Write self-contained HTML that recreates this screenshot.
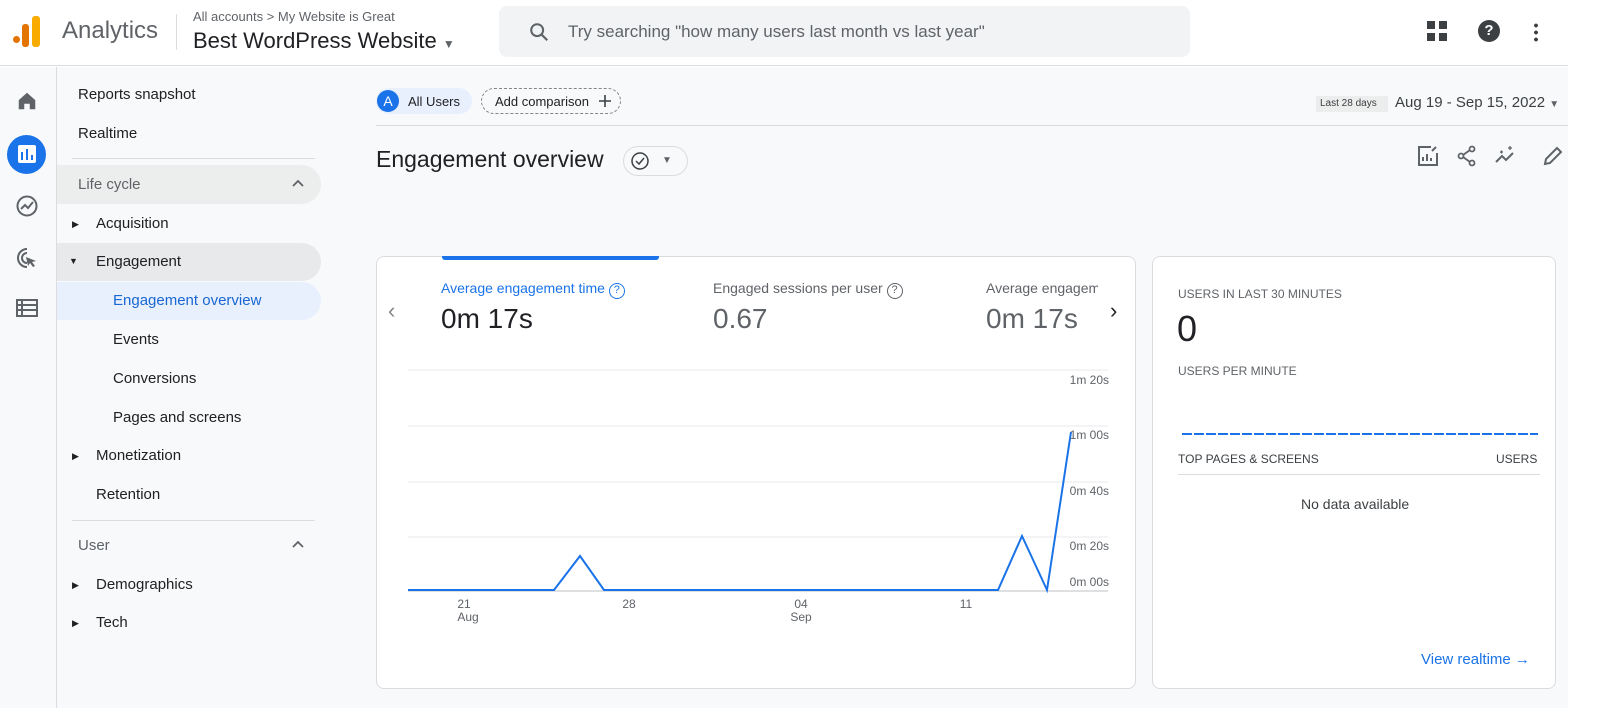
<!DOCTYPE html>
<html><head><style>
*{box-sizing:border-box;margin:0;padding:0}
body{width:1600px;height:708px;overflow:hidden;background:#fff;font-family:"Liberation Sans",sans-serif;color:#202124;position:relative}
.a{position:absolute}
.nav{font-size:15px;color:#202124}
.g{color:#5f6368}
</style></head><body>
<!-- header -->
<div class="a" style="left:0;top:0;width:1568px;height:66px;background:#fff;border-bottom:1px solid #dadce0"></div>
<div class="a" style="left:13px;top:36px;width:7px;height:7px;border-radius:50%;background:#e37400"></div>
<div class="a" style="left:22px;top:24px;width:7px;height:23px;border-radius:3px;background:#e37400"></div>
<div class="a" style="left:32px;top:16px;width:8px;height:31px;border-radius:3px;background:#f9ab00"></div>
<div class="a" style="left:62px;top:17px;font-size:24px;color:#5f6368">Analytics</div>
<div class="a" style="left:176px;top:14px;width:1px;height:36px;background:#dadce0"></div>
<div class="a" style="left:193px;top:9px;font-size:13px;color:#5f6368">All accounts &gt; My Website is Great</div>
<div class="a" style="left:193px;top:28px;font-size:22px;color:#202124">Best WordPress Website <span style="font-size:12px;color:#5f6368">▼</span></div>
<div class="a" style="left:499px;top:6px;width:691px;height:51px;background:#f1f3f4;border-radius:8px"></div>
<svg class="a" style="left:528px;top:21px" width="22" height="22" viewBox="0 0 24 24"><circle cx="10" cy="10" r="6.5" fill="none" stroke="#5f6368" stroke-width="2.2"/><path d="M15 15l6 6" stroke="#5f6368" stroke-width="2.4"/></svg>
<div class="a" style="left:568px;top:22px;font-size:17px;color:#5f6368">Try searching "how many users last month vs last year"</div>
<div class="a" style="left:1427px;top:21px;width:20px;height:20px;background:
linear-gradient(#3c4043,#3c4043) 0 0/8px 8px no-repeat,linear-gradient(#3c4043,#3c4043) 12px 0/8px 8px no-repeat,linear-gradient(#3c4043,#3c4043) 0 12px/8px 8px no-repeat,linear-gradient(#3c4043,#3c4043) 12px 12px/8px 8px no-repeat"></div>
<div class="a" style="left:1478px;top:20px;width:22px;height:22px;border-radius:50%;background:#3c4043;color:#fff;font-size:15px;font-weight:bold;text-align:center;line-height:22px">?</div>
<div class="a" style="left:1534px;top:22px;width:4px;height:20px;background:radial-gradient(circle,#3c4043 1.8px,transparent 2px) 0 0/4px 7px"></div>
<!-- body bg -->
<div class="a" style="left:0;top:67px;width:1568px;height:641px;background:#f8f9fa"></div>
<div class="a" style="left:56px;top:67px;width:1px;height:641px;background:#dadce0"></div>
<!-- left icons -->
<svg class="a" style="left:16px;top:90px" width="22" height="22" viewBox="0 0 24 24"><path d="M3 11L12 3l9 8v10h-6v-6H9v6H3z" fill="#5f6368"/></svg>
<div class="a" style="left:7px;top:135px;width:39px;height:39px;border-radius:50%;background:#1a73e8"></div>
<div class="a" style="left:18px;top:145px;width:18px;height:18px;border-radius:2px;background:#fff"></div>
<div class="a" style="left:21px;top:152px;width:2px;height:8px;background:#1a73e8"></div><div class="a" style="left:26px;top:149px;width:2px;height:11px;background:#1a73e8"></div><div class="a" style="left:31px;top:155px;width:2px;height:5px;background:#1a73e8"></div>
<svg class="a" style="left:15px;top:194px" width="24" height="24" viewBox="0 0 24 24"><circle cx="12" cy="12" r="9.5" fill="none" stroke="#5f6368" stroke-width="2"/><path d="M6 15l4-4 3 3 5-6" fill="none" stroke="#5f6368" stroke-width="2"/></svg>
<svg class="a" style="left:15px;top:246px" width="24" height="24" viewBox="0 0 24 24"><path d="M12 3a9 9 0 1 0 0 18" fill="none" stroke="#5f6368" stroke-width="2"/><path d="M12 7a5 5 0 1 0 0 10" fill="none" stroke="#5f6368" stroke-width="2"/><path d="M11 11l10 4-4 1 3 4-2 1-3-4-2 3z" fill="#5f6368"/></svg>
<svg class="a" style="left:16px;top:298px" width="22" height="20" viewBox="0 0 22 20"><path d="M1 2h20v16H1z M1 7h20 M1 12h20 M6 2v16" fill="none" stroke="#5f6368" stroke-width="2"/></svg>
<!-- nav -->
<div class="a nav" style="left:78px;top:86px">Reports snapshot</div>
<div class="a nav" style="left:78px;top:125px">Realtime</div>
<div class="a" style="left:72px;top:158px;width:243px;height:1px;background:#dadce0"></div>
<div class="a" style="left:57px;top:165px;width:264px;height:39px;background:#eceded;border-radius:0 20px 20px 0"></div>
<div class="a nav g" style="left:78px;top:176px">Life cycle</div>
<svg class="a" style="left:291px;top:179px" width="14" height="9" viewBox="0 0 14 9"><path d="M2 7l5-5 5 5" fill="none" stroke="#5f6368" stroke-width="1.8"/></svg>
<div class="a" style="left:72px;top:219px;font-size:9px">▶</div>
<div class="a nav" style="left:96px;top:215px">Acquisition</div>
<div class="a" style="left:57px;top:243px;width:264px;height:38px;background:#e8e9ea;border-radius:0 20px 20px 0"></div>
<div class="a" style="left:69px;top:256px;font-size:9px">▼</div>
<div class="a nav" style="left:96px;top:253px">Engagement</div>
<div class="a" style="left:57px;top:282px;width:264px;height:38px;background:#e8f0fe;border-radius:0 20px 20px 0"></div>
<div class="a nav" style="left:113px;top:292px;color:#1967d2">Engagement overview</div>
<div class="a nav" style="left:113px;top:331px">Events</div>
<div class="a nav" style="left:113px;top:370px">Conversions</div>
<div class="a nav" style="left:113px;top:409px">Pages and screens</div>
<div class="a" style="left:72px;top:451px;font-size:9px">▶</div>
<div class="a nav" style="left:96px;top:447px">Monetization</div>
<div class="a nav" style="left:96px;top:486px">Retention</div>
<div class="a" style="left:72px;top:520px;width:243px;height:1px;background:#dadce0"></div>
<div class="a nav g" style="left:78px;top:537px">User</div>
<svg class="a" style="left:291px;top:540px" width="14" height="9" viewBox="0 0 14 9"><path d="M2 7l5-5 5 5" fill="none" stroke="#5f6368" stroke-width="1.8"/></svg>
<div class="a" style="left:72px;top:580px;font-size:9px">▶</div>
<div class="a nav" style="left:96px;top:576px">Demographics</div>
<div class="a" style="left:72px;top:618px;font-size:9px">▶</div>
<div class="a nav" style="left:96px;top:614px">Tech</div>
<!-- top bar main -->
<div class="a" style="left:376px;top:88px;width:96px;height:26px;border-radius:13px;background:#e8f0fe"></div>
<div class="a" style="left:377px;top:90px;width:22px;height:22px;border-radius:50%;background:#1a73e8;color:#fff;font-size:14px;text-align:center;line-height:22px">A</div>
<div class="a" style="left:408px;top:94px;font-size:13px">All Users</div>
<div class="a" style="left:481px;top:88px;width:140px;height:26px;border-radius:13px;border:1px dashed #80868b"></div>
<div class="a" style="left:495px;top:94px;font-size:13px">Add comparison</div>
<svg class="a" style="left:598px;top:94px" width="14" height="14" viewBox="0 0 14 14"><path d="M7 1v12M1 7h12" stroke="#3c4043" stroke-width="1.6"/></svg>
<div class="a" style="left:1316px;top:96px;width:72px;height:16px;background:#eceded"></div>
<div class="a" style="left:1320px;top:98px;font-size:10px;color:#3c4043">Last 28 days</div>
<div class="a" style="left:1395px;top:94px;font-size:15px;color:#3c4043">Aug 19 - Sep 15, 2022 <span style="font-size:10px;color:#5f6368">▼</span></div>
<div class="a" style="left:376px;top:125px;width:1192px;height:1px;background:#dadce0"></div>
<div class="a" style="left:376px;top:146px;font-size:23px">Engagement overview</div>
<div class="a" style="left:623px;top:146px;width:65px;height:30px;border-radius:15px;border:1px solid #dadce0"></div>
<svg class="a" style="left:630px;top:151px" width="20" height="20" viewBox="0 0 20 20"><circle cx="10" cy="10" r="8" fill="none" stroke="#3c4043" stroke-width="1.5"/><path d="M6 10l3 3 5-6" fill="none" stroke="#3c4043" stroke-width="1.5"/></svg>
<div class="a" style="left:662px;top:155px;font-size:10px;color:#5f6368">▼</div>
<svg class="a" style="left:1417px;top:145px" width="22" height="22" viewBox="0 0 22 22"><path d="M14 2H2v18h18V8" fill="none" stroke="#5f6368" stroke-width="2"/><path d="M6 16v-4M10 16V9M14 16v-3M15 6l4-4" stroke="#5f6368" stroke-width="2"/></svg>
<svg class="a" style="left:1456px;top:145px" width="22" height="22" viewBox="0 0 22 22"><circle cx="16" cy="4" r="2.5" fill="none" stroke="#5f6368" stroke-width="1.8"/><circle cx="5" cy="11" r="2.5" fill="none" stroke="#5f6368" stroke-width="1.8"/><circle cx="16" cy="18" r="2.5" fill="none" stroke="#5f6368" stroke-width="1.8"/><path d="M7 10l7-5M7 12l7 5" stroke="#5f6368" stroke-width="1.8"/></svg>
<svg class="a" style="left:1494px;top:145px" width="24" height="22" viewBox="0 0 24 22"><path d="M2 17l6-6 4 4 7-7" fill="none" stroke="#5f6368" stroke-width="2"/><path d="M14 3h4M16 1v4M6 7h3M7.5 5.5v3" stroke="#5f6368" stroke-width="1.3"/></svg>
<svg class="a" style="left:1542px;top:145px" width="22" height="22" viewBox="0 0 22 22"><path d="M3 19l1-5L15 3l4 4L8 18z" fill="none" stroke="#5f6368" stroke-width="2"/></svg>
<!-- left card -->
<div class="a" style="left:376px;top:256px;width:760px;height:433px;background:#fff;border:1px solid #dadce0;border-radius:8px"></div>
<div class="a" style="left:442px;top:256px;width:217px;height:4px;background:#1a73e8;border-radius:0 0 3px 3px"></div>
<div class="a" style="left:388px;top:298px;font-size:22px;color:#80868b">‹</div>
<div class="a" style="left:1110px;top:298px;font-size:22px;color:#202124">›</div>
<div class="a" style="left:441px;top:280px;font-size:14px;color:#1a73e8">Average engagement time <span style="display:inline-block;width:16px;height:16px;border:1.5px solid #1a73e8;border-radius:50%;font-size:11px;text-align:center;line-height:13px">?</span></div>
<div class="a" style="left:441px;top:303px;font-size:28px">0m 17s</div>
<div class="a" style="left:713px;top:280px;font-size:14px;color:#5f6368">Engaged sessions per user <span style="display:inline-block;width:16px;height:16px;border:1.5px solid #5f6368;border-radius:50%;font-size:11px;text-align:center;line-height:13px">?</span></div>
<div class="a" style="left:713px;top:303px;font-size:28px;color:#5f6368">0.67</div>
<div class="a" style="left:986px;top:280px;width:112px;overflow:hidden;white-space:nowrap;font-size:14px;color:#5f6368">Average engagement</div>
<div class="a" style="left:986px;top:303px;font-size:28px;color:#5f6368">0m 17s</div>
<svg class="a" style="left:376px;top:360px" width="760" height="270">
<g stroke="#e8eaed" stroke-width="1"><line x1="32" y1="10" x2="732" y2="10"/><line x1="32" y1="66" x2="732" y2="66"/><line x1="32" y1="122" x2="732" y2="122"/><line x1="32" y1="177" x2="732" y2="177"/></g>
<line x1="32" y1="231" x2="732" y2="231" stroke="#bdc1c6"/>
<polyline fill="none" stroke="#1a73e8" stroke-width="2" points="32,230 178,230 204,196 228,230 622,230 646,176 671,230 695,72"/>
<g font-size="12" fill="#5f6368" text-anchor="end" font-family="Liberation Sans"><text x="733" y="24">1m 20s</text><text x="733" y="79">1m 00s</text><text x="733" y="135">0m 40s</text><text x="733" y="190">0m 20s</text><text x="733" y="226">0m 00s</text></g>
<g font-size="12" fill="#5f6368" text-anchor="middle" font-family="Liberation Sans"><text x="88" y="248">21</text><text x="92" y="261">Aug</text><text x="253" y="248">28</text><text x="425" y="248">04</text><text x="425" y="261">Sep</text><text x="590" y="248">11</text></g>
</svg>
<!-- right card -->
<div class="a" style="left:1152px;top:256px;width:404px;height:433px;background:#fff;border:1px solid #dadce0;border-radius:8px"></div>
<div class="a" style="left:1178px;top:287px;font-size:12px;color:#5f6368">USERS IN LAST 30 MINUTES</div>
<div class="a" style="left:1177px;top:308px;font-size:36px">0</div>
<div class="a" style="left:1178px;top:364px;font-size:12px;color:#5f6368">USERS PER MINUTE</div>
<div class="a" style="left:1182px;top:433px;width:356px;height:2px;background:repeating-linear-gradient(90deg,#1a73e8 0 10px,transparent 10px 12px)"></div>
<div class="a" style="left:1178px;top:452px;font-size:12px;color:#3c4043">TOP PAGES &amp; SCREENS</div>
<div class="a" style="left:1496px;top:452px;font-size:12px;color:#3c4043">USERS</div>
<div class="a" style="left:1178px;top:474px;width:362px;height:1px;background:#dadce0"></div>
<div class="a" style="left:1301px;top:496px;font-size:14px;color:#3c4043">No data available</div>
<div class="a" style="left:1421px;top:651px;font-size:15px;color:#1a73e8">View realtime →</div>
</body></html>
